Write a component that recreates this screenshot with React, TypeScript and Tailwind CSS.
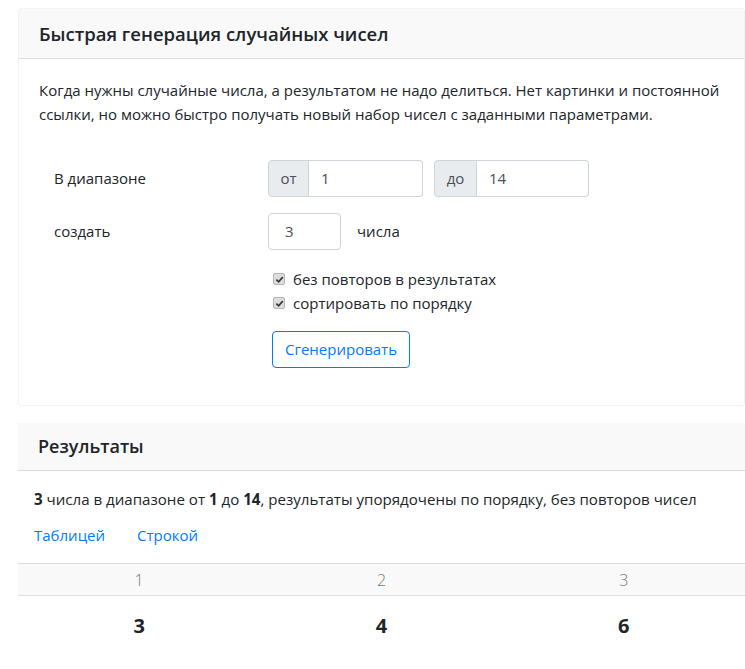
import React from 'react';

const font = { fontFamily: '"Open Sans", "Noto Sans", sans-serif' };

const Check: React.FC<{ label: string }> = ({ label }) => (
  <label className="flex items-center h-6 text-[15px] text-[#212529]">
    <span className="w-[12px] h-[12px] mr-[8px] rounded-[2px] bg-[#dcdcdc] border border-[#b5b5b5] flex items-center justify-center">
      <svg width="9" height="9" viewBox="0 0 10 10">
        <path d="M1.5 5.2 L4 7.6 L8.6 2.4" fill="none" stroke="#333" strokeWidth="1.8" />
      </svg>
    </span>
    {label}
  </label>
);

const App: React.FC = () => {
  return (
    <div className="w-[745px] h-[669px] overflow-hidden bg-white text-[#212529]" style={font}>
      <div className="ml-[18px] mt-[8px] w-[727px]">
        {/* генерация */}
        <section className="border border-[#f3f3f3] rounded-[3px]">
          <div className="h-[50px] px-5 flex items-center bg-[#f9f9f9] border-b border-[#dcdcdc]">
            <h2 className="text-[18.5px] font-semibold">Быстрая генерация случайных чисел</h2>
          </div>
          <div className="px-5 pt-[19px] pb-[37px]">
            <p className="text-[15px] leading-6">
              Когда нужны случайные числа, а результатом не надо делиться. Нет картинки и постоянной
              ссылки, но можно быстро получать новый набор чисел с заданными параметрами.
            </p>
            <div className="pl-[15px] mt-[33px] text-[15px]">
              <div className="flex items-center h-[38px]">
                <div className="w-[214px]">В диапазоне</div>
                <div className="flex h-[37px]">
                  <span className="w-[41px] flex items-center justify-center bg-[#e9ecef] border border-[#ced4da] rounded-l-[4px] text-[#495057]">от</span>
                  <span className="w-[114px] flex items-center pl-3 border border-l-0 border-[#ced4da] rounded-r-[4px] text-[#495057]">1</span>
                </div>
                <div className="flex h-[37px] ml-[11px]">
                  <span className="w-[43px] flex items-center justify-center bg-[#e9ecef] border border-[#ced4da] rounded-l-[4px] text-[#495057]">до</span>
                  <span className="w-[112px] flex items-center pl-3 border border-l-0 border-[#ced4da] rounded-r-[4px] text-[#495057]">14</span>
                </div>
              </div>
              <div className="flex items-center h-[38px] mt-[15px]">
                <div className="w-[214px]">создать</div>
                <span className="w-[73px] h-[37px] flex items-center pl-4 border border-[#ced4da] rounded-[4px] text-[#495057]">3</span>
                <span className="ml-4">числа</span>
              </div>
              <div className="ml-[219px] mt-[17px]">
                <Check label="без повторов в результатах" />
                <Check label="сортировать по порядку" />
                <button className="mt-[16px] ml-[-1px] h-[37px] px-3 border border-[#007bff] rounded-[4px] text-[#007bff] text-[15px]">
                  Сгенерировать
                </button>
              </div>
            </div>
          </div>
        </section>

        {/* результаты */}
        <section className="mt-[17px]">
          <div className="h-[48px] px-5 flex items-center bg-[#f9f9f9] border-b border-[#dcdcdc]">
            <h2 className="text-[18px] font-semibold">Результаты</h2>
          </div>
          <p className="px-4 pt-[16px] text-[15.1px] leading-6">
            <b>3</b> числа в диапазоне от <b>1</b> до <b>14</b>, результаты упорядочены по порядку, без повторов чисел
          </p>
          <nav className="flex mt-[4px] text-[15px] text-[#007bff]">
            <a className="px-4 py-2 leading-6">Таблицей</a>
            <a className="px-4 py-2 leading-6">Строкой</a>
          </nav>
          <div className="mt-[8px] grid grid-cols-3 text-center">
            <div className="col-span-3 grid grid-cols-3 h-[33px] items-center bg-[#f9f9f9] border-y border-[#dedede] text-[16px] font-light text-[#777]">
              <span>1</span>
              <span>2</span>
              <span>3</span>
            </div>
            <div className="col-span-3 grid grid-cols-3 h-[60px] items-center text-[20px] font-bold">
              <span>3</span>
              <span>4</span>
              <span>6</span>
            </div>
          </div>
        </section>
      </div>
    </div>
  );
};

export default App;
